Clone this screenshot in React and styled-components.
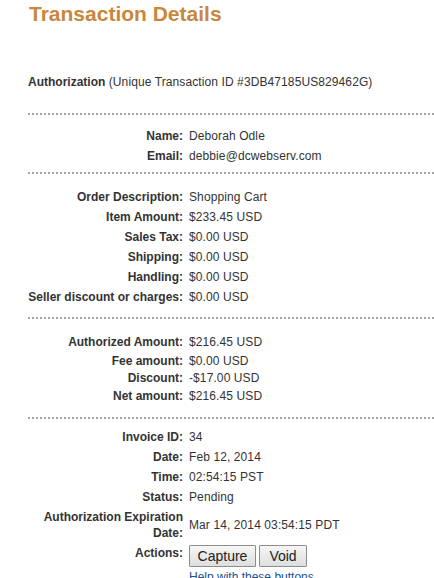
import styled, { createGlobalStyle } from "styled-components";

const Global = createGlobalStyle`
  body {
    margin: 0;
    background: #fff;
    font-family: "Liberation Sans", Arial, sans-serif;
    color: #333;
  }
`;

const Page = styled.div`
  padding-left: 28px;
  overflow: hidden;
`;

const Title = styled.h1`
  margin: 0;
  padding: 2px 0 0 1px;
  font-size: 21px;
  line-height: 24px;
  font-weight: bold;
  color: #c8873d;
`;

const Section = styled.div`
  padding: ${(p) => p.pad || "0"};
  border-bottom: ${(p) => (p.last ? "none" : "2px dotted #a4a4a4")};
`;

const Heading = styled.div`
  margin-top: 48px;
  font-size: 12px;
  line-height: 16px;
  letter-spacing: 0.1px;

  b {
    font-weight: bold;
    letter-spacing: 0;
  }
`;

const Row = styled.div`
  display: grid;
  grid-template-columns: 155px 1fr;
  column-gap: 6px;
  align-items: ${(p) => (p.top ? "start" : "center")};
  padding: ${(p) => (p.tight ? "0" : "2px 0")};
  height: ${(p) => (p.tight ? "17px" : "auto")};
  font-size: 12px;
  line-height: 16px;
`;

const Label = styled.div`
  text-align: right;
  font-weight: bold;
`;

const Value = styled.div`
  letter-spacing: 0.1px;
`;

const Buttons = styled.div`
  display: flex;
  gap: 3px;
`;

const Button = styled.button`
  height: 22px;
  width: ${(p) => p.w}px;
  padding: 0;
  border: 1px solid #8c8c8c;
  border-radius: 1px;
  background: linear-gradient(#f6f6f6, #dedede);
  font-family: "Liberation Sans", Arial, sans-serif;
  font-size: 14px;
  color: #222;
`;

const Help = styled.a`
  display: block;
  margin-left: 161px;
  font-size: 12px;
  line-height: 16px;
  color: #1a4d94;
  text-decoration: underline;
`;

const contact = [
  ["Name:", "Deborah Odle"],
  ["Email:", "debbie@dcwebserv.com"],
];

const order = [
  ["Order Description:", "Shopping Cart"],
  ["Item Amount:", "$233.45 USD"],
  ["Sales Tax:", "$0.00 USD"],
  ["Shipping:", "$0.00 USD"],
  ["Handling:", "$0.00 USD"],
  ["Seller discount or charges:", "$0.00 USD"],
];

const info = [
  ["Invoice ID:", "34"],
  ["Date:", "Feb 12, 2014"],
  ["Time:", "02:54:15 PST"],
  ["Status:", "Pending"],
  ["Authorization Expiration Date:", "Mar 14, 2014 03:54:15 PDT"],
];

function Rows({ items }) {
  return items.map(([l, v]) => (
    <Row key={l}>
      <Label>{l}</Label>
      <Value>{v}</Value>
    </Row>
  ));
}

export default function App() {
  return (
    <Page>
      <Global />
      <Title>Transaction Details</Title>
      <Section pad="0 0 23px">
        <Heading>
          <b>Authorization</b> (Unique Transaction ID #3DB47185US829462G)
        </Heading>
      </Section>
      <Section pad="11px 0 6px">
        <Rows items={contact} />
      </Section>
      <Section pad="13px 0 10px">
        <Rows items={order} />
      </Section>
      <Section pad="13px 0 11px">
        <Row>
          <Label>Authorized Amount:</Label>
          <Value>$216.45 USD</Value>
        </Row>
        <Row tight>
          <Label>Fee amount:</Label>
          <Value>$0.00 USD</Value>
        </Row>
        <Row tight>
          <Label>Discount:</Label>
          <Value>-$17.00 USD</Value>
        </Row>
        <Row>
          <Label>Net amount:</Label>
          <Value>$216.45 USD</Value>
        </Row>
      </Section>
      <Section pad="8px 0 0" last>
        <Rows items={info} />
        <Row top>
          <Label>Actions:</Label>
          <Buttons>
            <Button w={67}>Capture</Button>
            <Button w={48}>Void</Button>
          </Buttons>
        </Row>
        <Help href="#">Help with these buttons</Help>
      </Section>
    </Page>
  );
}
